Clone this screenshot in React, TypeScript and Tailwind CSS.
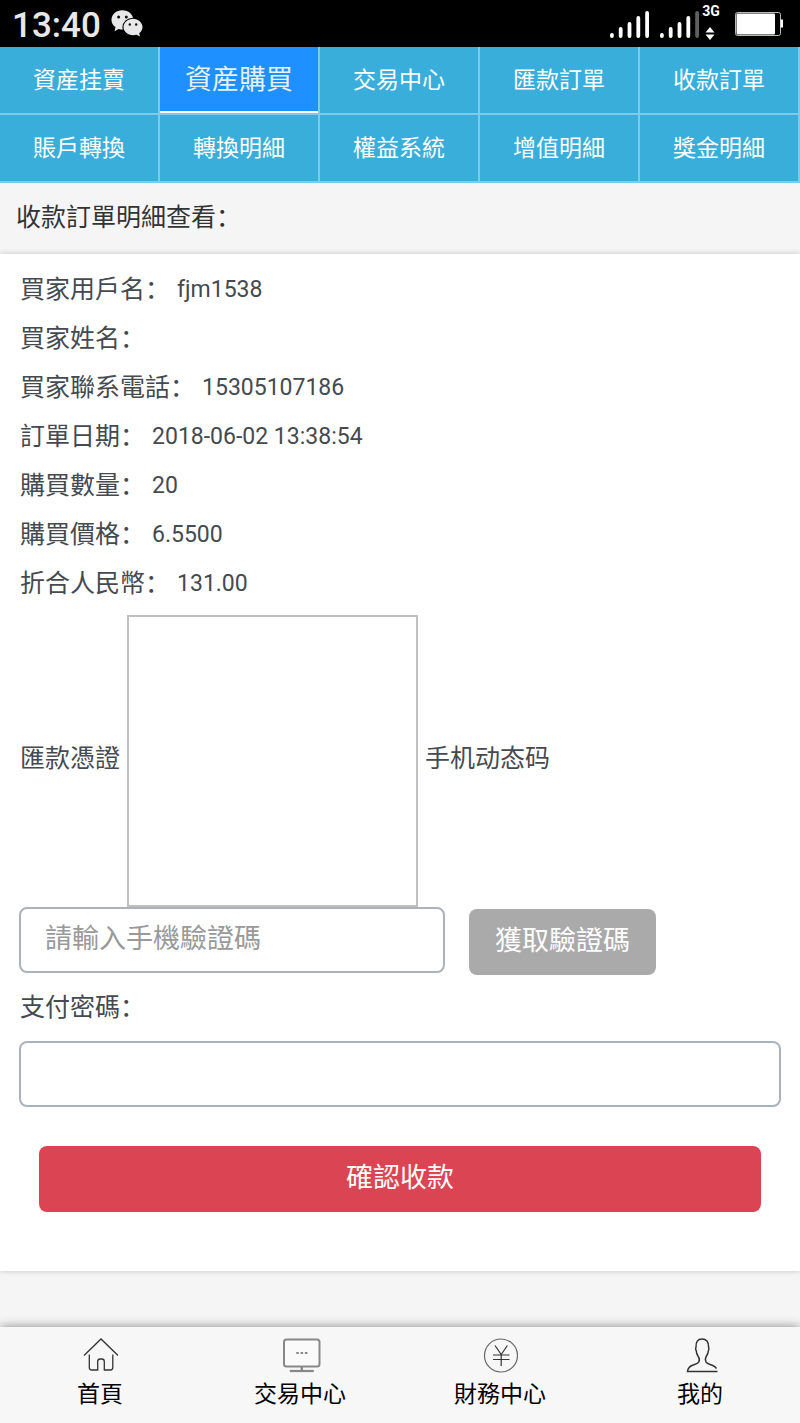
import type { ReactNode } from "react";

const tabs = [
  "資産挂賣",
  "資産購買",
  "交易中心",
  "匯款訂單",
  "收款訂單",
  "賬戶轉換",
  "轉換明細",
  "權益系統",
  "增值明細",
  "獎金明細",
];
const activeTab = "資産購買";

const details = [
  { label: "買家用戶名", value: "fjm1538" },
  { label: "買家姓名", value: "" },
  { label: "買家聯系電話", value: "15305107186" },
  { label: "訂單日期", value: "2018-06-02 13:38:54" },
  { label: "購買數量", value: "20" },
  { label: "購買價格", value: "6.5500" },
  { label: "折合人民幣", value: "131.00" },
];

function WechatIcon() {
  return (
    <svg width="32" height="28" viewBox="0 0 32 28" aria-hidden="true">
      <path
        d="M11.3 0.300C5.3 .3 .5 4.500 .5 9.900c0 3 1.500 5.500 4 7.200L3.600 21.300l4-2.300c1.200.4 2.500.6 3.800.6 6.100 0 10.900-4.300 10.900-9.700S17.400 .3 11.300 .3z"
        fill="#e8e8e8"
      />
      <ellipse cx="22" cy="17.300" rx="10.600" ry="9.600" fill="#000" />
      <path
        d="M22 8.700c5.200 0 9.500 3.800 9.500 8.400 0 2.500-1.300 4.600-3.300 6.200l.8 3.200-3.400-1.700c-1.100.3-2.400.5-3.600.5-5.200 0-9.500-3.600-9.500-8.200s4.300-8.400 9.500-8.400z"
        fill="#e8e8e8"
      />
      <circle cx="7.600" cy="7" r="1.500" fill="#111" />
      <circle cx="15.300" cy="7" r="1.500" fill="#111" />
      <circle cx="18.800" cy="14.500" r="1.200" fill="#111" />
      <circle cx="25.200" cy="14.500" r="1.200" fill="#111" />
    </svg>
  );
}

function SignalIcon() {
  const tops = [25, 19, 14, 8, 3];
  return (
    <svg width="92" height="32" viewBox="0 0 92 32" aria-hidden="true">
      {[2, 52].map((start) =>
        tops.map((top, i) => (
          <rect
            key={`${start}-${i}`}
            x={start + i * 8.8}
            y={top}
            width="3.800"
            height={30 - top}
            rx="1.900"
            fill={start === 52 && i === 4 ? "#5f5f5f" : "#fff"}
          />
        )),
      )}
    </svg>
  );
}

function BatteryIcon() {
  return (
    <svg width="48" height="26" viewBox="0 0 48 26" aria-hidden="true">
      <rect x="0.500" y="1.500" width="45" height="23" rx="2" fill="none" stroke="#bbb" />
      <rect x="1.500" y="2.500" width="38.500" height="21" rx="1" fill="#fff" />
      <rect x="45.500" y="8.500" width="2.500" height="8" fill="#fff" />
    </svg>
  );
}

function StatusBar() {
  return (
    <div className="flex h-[47px] items-center justify-between bg-black pr-[17px] pl-3">
      <div className="flex items-center gap-[10px]">
        <span className="pt-1 text-[35px] leading-[43px] font-medium text-[#e8e8e8]">13:40</span>
        <WechatIcon />
      </div>
      <div className="flex items-center">
        <SignalIcon />
        <div className="flex w-5 flex-col items-center gap-2 pb-1 pl-0.5">
          <span className="text-[14px] leading-4 font-bold text-white">3G</span>
          <svg width="12" height="13" viewBox="0 0 12 13" fill="#fff" aria-hidden="true">
            <path d="M5 0l4.500 5.500h-9zM5 13l4.500-5.500h-9z" />
          </svg>
        </div>
        <div className="pl-[15px]">
          <BatteryIcon />
        </div>
      </div>
    </div>
  );
}

function HomeIcon() {
  return (
    <svg width="36" height="36" viewBox="0 0 36 36" fill="none" stroke="#333" strokeWidth="1.300" aria-hidden="true">
      <path d="M2 18.500L19 2l17 16.500" />
      <path d="M7.300 17.500v13q0 2.500 2.500 2.500h5.900v-8.500q0-2.500 2.500-2.500h1.600q2.500 0 2.500 2.500v8.500h6q2.500 0 2.500-2.500v-13" />
    </svg>
  );
}

function MonitorIcon() {
  return (
    <svg width="42" height="36" viewBox="0 0 42 36" fill="none" stroke="#888" aria-hidden="true">
      <rect x="5" y="2.500" width="35.500" height="27" rx="2.500" strokeWidth="2" fill="#fafafa" />
      <path d="M22.800 29.500v4" strokeWidth="2.400" />
      <path d="M10.800 34h24" strokeWidth="2.200" />
      <path d="M17.300 16h2.500M21.600 16h2.500M25.900 16h2.500" strokeWidth="2" />
    </svg>
  );
}

function YenIcon() {
  return (
    <svg width="36" height="36" viewBox="0 0 36 36" fill="none" stroke="#666" aria-hidden="true">
      <circle cx="19" cy="18.500" r="16.500" strokeWidth="1.200" />
      <path d="M13 8.500l6.200 9 6.200-9M19.200 17.500V29M11 18h16.500M11 22.500h16.500" stroke="#333" strokeWidth="1.200" />
    </svg>
  );
}

function UserIcon() {
  return (
    <svg width="36" height="36" viewBox="0 0 36 36" fill="none" stroke="#333" strokeWidth="1.500" aria-hidden="true">
      <path d="M35.500 34.500H5.500q.5-4.500 5-6.200c3-1.200 5.500-1.500 6.400-3.500.7-1.600.3-4-.7-5.300-1.300-2-1.900-3.500-1.900-5.500-1-1.500-.8-3-.3-4C13.900 5 15.500 2 20 2s6.600 3 6.600 8c.5 1.500.6 2.800-.3 4 0 2-.8 3.500-2.100 5.500-.8 1.300-1 3.700-.3 5.300 1.200 2 3.800 2.500 6.300 3.500q3 1.200 4.300 3.200" />
    </svg>
  );
}

const footerItems: { label: string; icon: ReactNode }[] = [
  { label: "首頁", icon: <HomeIcon /> },
  { label: "交易中心", icon: <MonitorIcon /> },
  { label: "財務中心", icon: <YenIcon /> },
  { label: "我的", icon: <UserIcon /> },
];

export default function App() {
  return (
    <div
      lang="zh"
      className="flex min-h-screen flex-col bg-[#f5f5f5] font-['Roboto','Noto_Sans_CJK_SC',sans-serif] text-[25px] text-[#444a50]"
    >
      <StatusBar />

      <nav className="grid grid-cols-5 bg-[#3aaedb]">
        {tabs.map((tab) => (
          <a
            key={tab}
            href="#"
            aria-current={tab === activeTab ? "page" : undefined}
            className="flex h-[68px] border-r-2 border-b-2 border-[#7ccbea] text-white"
          >
            {tab === activeTab ? (
              <span className="flex flex-1 items-center justify-center border-b-2 border-white bg-[#1e90ff] pt-0.5 text-[27px] leading-8 text-[#e3f1ff]">
                {tab}
              </span>
            ) : (
              <span className="flex flex-1 items-center justify-center pt-0.5 text-[23px] leading-8">{tab}</span>
            )}
          </a>
        ))}
      </nav>

      <h1 className="px-4 pt-[17px] pb-[18px] leading-9 text-[#333]">收款訂單明細查看：</h1>

      <main className="bg-white px-[19px] pt-[11px] pb-[59px] shadow-[0_0_6px_rgba(0,0,0,0.2)]">
        <dl className="flex flex-col pl-px">
          {details.map(({ label, value }) => (
            <div key={label} className="flex h-[49px] items-center gap-[7px]">
              <dt>{label}：</dt>
              <dd className="pt-0.5 text-[23px]">{value}</dd>
            </div>
          ))}
        </dl>

        <div className="flex items-center gap-[7px] pt-[7px] pl-px">
          <span className="pb-1">匯款憑證</span>
          <div className="h-[292px] w-[291px] border-2 border-[#c0c0c0]" role="img" aria-label="匯款憑證" />
          <label htmlFor="sms-code" className="pb-1">
            手机动态码
          </label>
        </div>

        <div className="flex items-start gap-6">
          <input
            id="sms-code"
            type="text"
            placeholder="請輸入手機驗證碼"
            className="h-[66px] w-[426px] min-w-0 rounded-lg border-2 border-[#aab2bd] bg-white px-6 pb-0.5 text-[27px] placeholder:text-[#999]"
          />
          <button type="button" className="mt-0.5 h-[66px] rounded-lg bg-[#aaa] px-[26px] pb-0.5 text-[27px] text-white">
            獲取驗證碼
          </button>
        </div>

        <label htmlFor="pay-password" className="block pt-[15px] pb-[15px] pl-px leading-9">
          支付密碼：
        </label>
        <input
          id="pay-password"
          type="password"
          className="block h-[66px] w-full rounded-lg border-2 border-[#aab2bd] bg-white px-6 text-[27px]"
        />

        <div className="px-5 pt-[39px]">
          <button type="submit" className="h-[66px] w-full rounded-lg bg-[#da4453] pb-0.5 text-[27px] text-white">
            確認收款
          </button>
        </div>
      </main>

      <footer className="mt-auto grid h-24 grid-cols-4 bg-[#f7f7f7] shadow-[0_0_10px_rgba(0,0,0,0.45)]">
        {footerItems.map(({ label, icon }) => (
          <a key={label} href="#" className="flex flex-col items-center gap-1 pt-[10px] text-[23px] leading-9 text-black">
            {icon}
            <span>{label}</span>
          </a>
        ))}
      </footer>
    </div>
  );
}
